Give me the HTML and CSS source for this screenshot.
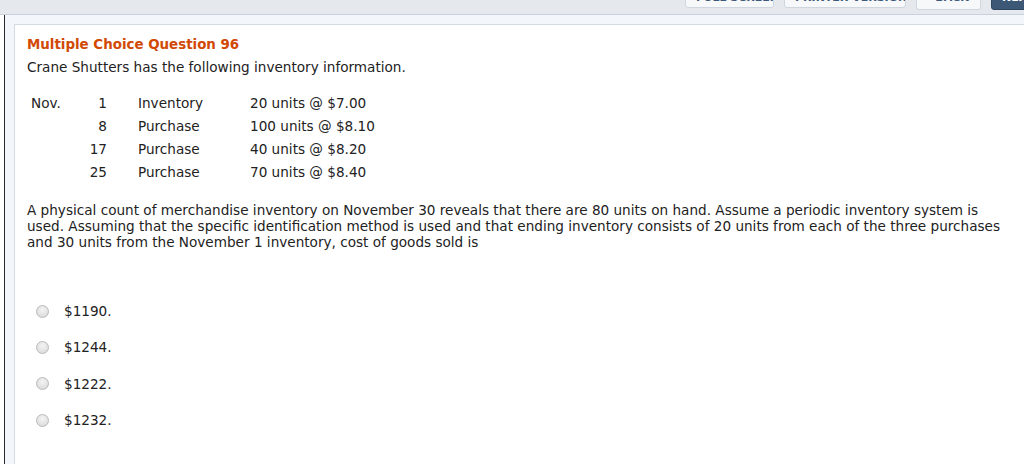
FILE: index.html
```html
<!DOCTYPE html>
<html>
<head>
<meta charset="utf-8">
<link rel="stylesheet" href="styles.css">
</head>
<body>
<div class="topbar">
  <div class="tools">
    <span class="btn b1">FULL SCREEN</span>
    <span class="btn b2">PRINTER VERSION</span>
    <span class="btn b3">‹ BACK</span>
    <span class="btn next">NEXT ›</span>
  </div>
</div>
<div class="frame">
  <div class="panel">
    <h1 class="qtitle">Multiple Choice Question 96</h1>
    <p class="intro">Crane Shutters has the following inventory information.</p>
    <table class="inv">
      <tr><td class="m">Nov.</td><td class="d">1</td><td class="t">Inventory</td><td class="u">20 units @ $7.00</td></tr>
      <tr><td class="m"></td><td class="d">8</td><td class="t">Purchase</td><td class="u">100 units @ $8.10</td></tr>
      <tr><td class="m"></td><td class="d">17</td><td class="t">Purchase</td><td class="u">40 units @ $8.20</td></tr>
      <tr><td class="m"></td><td class="d">25</td><td class="t">Purchase</td><td class="u">70 units @ $8.40</td></tr>
    </table>
    <p class="body">A physical count of merchandise inventory on November 30 reveals that there are 80 units on hand. Assume a periodic inventory system is used. Assuming that the specific identification method is used and that ending inventory consists of 20 units from each of the three purchases and 30 units from the November 1 inventory, cost of goods sold is</p>
    <ul class="opts">
      <li><span class="radio"></span><span>$1190.</span></li>
      <li><span class="radio"></span><span>$1244.</span></li>
      <li><span class="radio"></span><span>$1222.</span></li>
      <li><span class="radio"></span><span>$1232.</span></li>
    </ul>
  </div>
</div>
</body>
</html>
```
FILE: styles.css
```css
html, body { margin: 0; padding: 0; }
body {
  width: 1024px; height: 464px; overflow: hidden;
  font-family: "DejaVu Sans", Verdana, sans-serif;
  color: #222;
  background: #fff;
}
.topbar {
  height: 14px;
  background: #e5e9ed;
  border-bottom: 1px solid #c9d1da;
  position: relative;
  overflow: hidden;
}
.tools {
  position: absolute; top: -12px; left: 685px;
  display: flex; gap: 10px;
}
.btn {
  display: block; height: 20px; padding: 0 10px;
  border: 1px solid #cfd6de; border-radius: 3px;
  background: #f7f8fa; color: #3d5a7a;
  font-size: 11px; line-height: 18px; font-weight: bold;
  white-space: nowrap; box-sizing: border-box; overflow: hidden;
}
.b1 { width: 89px; }
.b2 { width: 122px; }
.b3 { width: 65px; height: 22px; }
.next { background: #3c5876; color: #fff; border-color: #2f4760; width: 60px; height: 22px; }
.frame {
  display: flex;
  height: 449px;
  border-left: 1px solid #2a2a2a;
  margin-left: 4px;
  background: #f3f6fa;
}
.panel {
  margin: 9px 0 0 9px;
  flex: 1;
  background: #fff;
  border-left: 1px solid #d3dae2;
  border-top: 1px solid #d3dae2;
  padding: 10px 0 0 12px;
  font-size: 13.6px;
}
.qtitle {
  margin: 0; font-size: 13.4px; font-weight: bold; color: #d14905;
  line-height: 20px;
}
.intro { margin: 2px 0 0; line-height: 20px; }
.inv { border-collapse: collapse; margin: 14px 0 0 4px; }
.inv td { padding: 0; height: 23px; vertical-align: middle; white-space: nowrap; }
.inv .m { width: 52px; }
.inv .d { text-align: right; width: 24px; }
.inv .t { padding-left: 31px; width: 112px; }
.body { margin: 19px 8px 0 0; line-height: 16px; }
.opts { list-style: none; margin: 43px 0 0; padding: 0; }
.opts li { display: flex; align-items: center; height: 36.3px; padding-left: 9px; gap: 15px; }
.radio {
  width: 13px; height: 13px; border-radius: 50%;
  border: 1px solid #b9b9b9;
  background: radial-gradient(circle at 50% 35%, #f4f4f4, #d6d6d6);
  box-sizing: border-box;
}
```
